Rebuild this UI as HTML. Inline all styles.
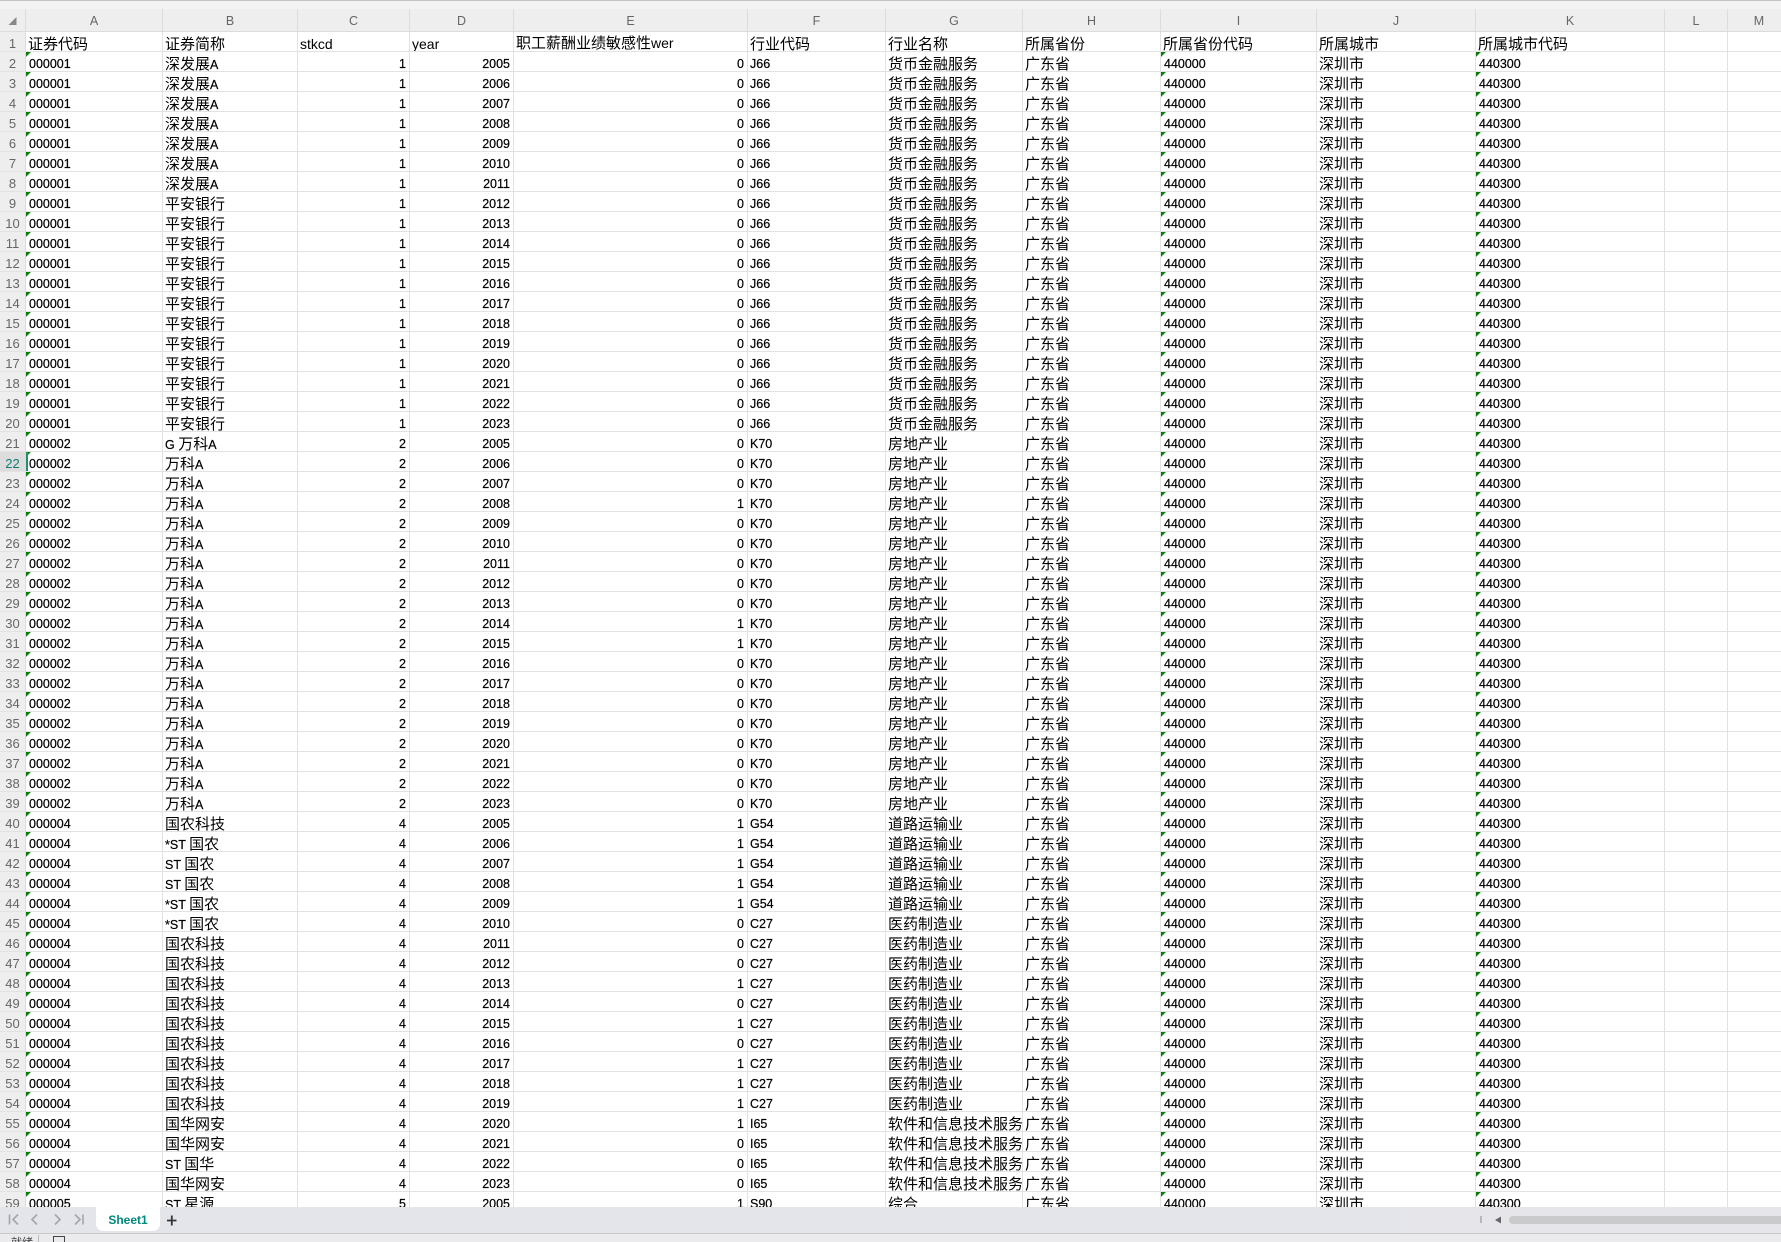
<!DOCTYPE html>
<html lang="zh"><head><meta charset="utf-8"><title>Sheet1</title>
<style>
html,body{margin:0;padding:0;background:#f3f3f3;width:1781px;height:1242px;overflow:hidden}
body{position:relative;font-family:"Liberation Sans","WenQuanYi Zen Hei","Noto Sans CJK SC",sans-serif}
#top{position:absolute;left:0;top:0;width:1781px;height:1px;background:#c4c4c4}
table{position:absolute;left:0;top:9px;border-collapse:separate;border-spacing:0;table-layout:fixed;width:1791px;background:#fff}
th,td{box-sizing:border-box;height:20px;border-right:1px solid #e2e2e2;border-bottom:1px solid #e2e2e2;overflow:hidden;white-space:nowrap;padding:6px 2px 0;line-height:13px;font-size:15px;font-weight:400;color:#000;text-align:left;vertical-align:top}
thead th{height:23px;background:#eee;color:#666;font-size:12.500px;text-align:center;padding-top:6px;border-right:1px solid #dcdcdc;border-bottom:1px solid #dcdcdc}
tbody th{background:#eee;color:#666;font-size:13px;text-align:center;padding:4px 0 0;line-height:15px;border-right:1px solid #dcdcdc}
tbody th.s{background:#dcdcdc;color:#0f7d74}
td.s{box-shadow:inset 2px 0 0 #1f8f70}
td b{font-weight:400;font-size:12.500px;line-height:0;-webkit-text-stroke:.2px #000}
.n,.t,.r,.l{font-size:12.500px;-webkit-text-stroke:.2px #000;padding-top:6px;line-height:13px}
.n{font-size:14px;-webkit-text-stroke:0;padding-top:5px;line-height:14px}
.r{text-align:right;padding-right:3px}
.t{padding-left:3px;background:linear-gradient(135deg,#0a7d0a 3.4px,transparent 3.6px) no-repeat 0 0/6px 6px}
#h1 b{font-size:14px;-webkit-text-stroke:0}
#tabs{position:absolute;left:0;top:1207px;width:1781px;height:26px;background:#e3e5ea;border-bottom:1px solid #c9c9c9;box-sizing:content-box}
#tabs .fade{position:absolute;left:1400px;right:0;top:0;bottom:0;background:#e6e6ea}
#tab{position:absolute;left:96px;top:0;width:64px;height:24px;background:#fff;border-radius:0 0 7px 7px;color:#00897b;font-weight:700;font-size:12px;line-height:27px;text-align:center}
#sb{position:absolute;left:1509px;top:9px;width:272px;height:8px;background:#cacacc;border-radius:4px 0 0 4px}
#status{position:absolute;left:0;top:1234px;width:1781px;height:8px;background:#ebebee;overflow:hidden}
#status span{position:absolute;left:11px;top:3px;font-size:11px;line-height:12px;color:#444}
svg{position:absolute;left:0;top:0}
</style></head><body>
<div id="top"></div>
<table>
<colgroup><col style="width:26px"><col style="width:137px"><col style="width:135px"><col style="width:112px"><col style="width:104px"><col style="width:234px"><col style="width:138px"><col style="width:137px"><col style="width:138px"><col style="width:156px"><col style="width:159px"><col style="width:189px"><col style="width:63px"><col style="width:63px"></colgroup>
<thead><tr><th style="font-size:8px;color:#888;padding-top:6px">◢<th>A<th>B<th>C<th>D<th>E<th>F<th>G<th>H<th>I<th>J<th>K<th>L<th>M</tr></thead>
<tbody>
<tr id="h1"><th>1<td>证券代码<td>证券简称<td class=n>stkcd<td class=n>year<td style="padding-top:4px;line-height:15px">职工薪酬业绩敏感性<b>wer</b><td>行业代码<td>行业名称<td>所属省份<td>所属省份代码<td>所属城市<td>所属城市代码<td><td>
<tr><th>2<td class=t>000001<td>深发展<b>A</b><td class=r>1<td class=r>2005<td class=r>0<td class=l>J66<td>货币金融服务<td>广东省<td class=t>440000<td>深圳市<td class=t>440300<td><td>
<tr><th>3<td class=t>000001<td>深发展<b>A</b><td class=r>1<td class=r>2006<td class=r>0<td class=l>J66<td>货币金融服务<td>广东省<td class=t>440000<td>深圳市<td class=t>440300<td><td>
<tr><th>4<td class=t>000001<td>深发展<b>A</b><td class=r>1<td class=r>2007<td class=r>0<td class=l>J66<td>货币金融服务<td>广东省<td class=t>440000<td>深圳市<td class=t>440300<td><td>
<tr><th>5<td class=t>000001<td>深发展<b>A</b><td class=r>1<td class=r>2008<td class=r>0<td class=l>J66<td>货币金融服务<td>广东省<td class=t>440000<td>深圳市<td class=t>440300<td><td>
<tr><th>6<td class=t>000001<td>深发展<b>A</b><td class=r>1<td class=r>2009<td class=r>0<td class=l>J66<td>货币金融服务<td>广东省<td class=t>440000<td>深圳市<td class=t>440300<td><td>
<tr><th>7<td class=t>000001<td>深发展<b>A</b><td class=r>1<td class=r>2010<td class=r>0<td class=l>J66<td>货币金融服务<td>广东省<td class=t>440000<td>深圳市<td class=t>440300<td><td>
<tr><th>8<td class=t>000001<td>深发展<b>A</b><td class=r>1<td class=r>2011<td class=r>0<td class=l>J66<td>货币金融服务<td>广东省<td class=t>440000<td>深圳市<td class=t>440300<td><td>
<tr><th>9<td class=t>000001<td>平安银行<td class=r>1<td class=r>2012<td class=r>0<td class=l>J66<td>货币金融服务<td>广东省<td class=t>440000<td>深圳市<td class=t>440300<td><td>
<tr><th>10<td class=t>000001<td>平安银行<td class=r>1<td class=r>2013<td class=r>0<td class=l>J66<td>货币金融服务<td>广东省<td class=t>440000<td>深圳市<td class=t>440300<td><td>
<tr><th>11<td class=t>000001<td>平安银行<td class=r>1<td class=r>2014<td class=r>0<td class=l>J66<td>货币金融服务<td>广东省<td class=t>440000<td>深圳市<td class=t>440300<td><td>
<tr><th>12<td class=t>000001<td>平安银行<td class=r>1<td class=r>2015<td class=r>0<td class=l>J66<td>货币金融服务<td>广东省<td class=t>440000<td>深圳市<td class=t>440300<td><td>
<tr><th>13<td class=t>000001<td>平安银行<td class=r>1<td class=r>2016<td class=r>0<td class=l>J66<td>货币金融服务<td>广东省<td class=t>440000<td>深圳市<td class=t>440300<td><td>
<tr><th>14<td class=t>000001<td>平安银行<td class=r>1<td class=r>2017<td class=r>0<td class=l>J66<td>货币金融服务<td>广东省<td class=t>440000<td>深圳市<td class=t>440300<td><td>
<tr><th>15<td class=t>000001<td>平安银行<td class=r>1<td class=r>2018<td class=r>0<td class=l>J66<td>货币金融服务<td>广东省<td class=t>440000<td>深圳市<td class=t>440300<td><td>
<tr><th>16<td class=t>000001<td>平安银行<td class=r>1<td class=r>2019<td class=r>0<td class=l>J66<td>货币金融服务<td>广东省<td class=t>440000<td>深圳市<td class=t>440300<td><td>
<tr><th>17<td class=t>000001<td>平安银行<td class=r>1<td class=r>2020<td class=r>0<td class=l>J66<td>货币金融服务<td>广东省<td class=t>440000<td>深圳市<td class=t>440300<td><td>
<tr><th>18<td class=t>000001<td>平安银行<td class=r>1<td class=r>2021<td class=r>0<td class=l>J66<td>货币金融服务<td>广东省<td class=t>440000<td>深圳市<td class=t>440300<td><td>
<tr><th>19<td class=t>000001<td>平安银行<td class=r>1<td class=r>2022<td class=r>0<td class=l>J66<td>货币金融服务<td>广东省<td class=t>440000<td>深圳市<td class=t>440300<td><td>
<tr><th>20<td class=t>000001<td>平安银行<td class=r>1<td class=r>2023<td class=r>0<td class=l>J66<td>货币金融服务<td>广东省<td class=t>440000<td>深圳市<td class=t>440300<td><td>
<tr><th>21<td class=t>000002<td><b>G </b>万科<b>A</b><td class=r>2<td class=r>2005<td class=r>0<td class=l>K70<td>房地产业<td>广东省<td class=t>440000<td>深圳市<td class=t>440300<td><td>
<tr><th class=s>22<td class="t s">000002<td>万科<b>A</b><td class=r>2<td class=r>2006<td class=r>0<td class=l>K70<td>房地产业<td>广东省<td class=t>440000<td>深圳市<td class=t>440300<td><td>
<tr><th>23<td class=t>000002<td>万科<b>A</b><td class=r>2<td class=r>2007<td class=r>0<td class=l>K70<td>房地产业<td>广东省<td class=t>440000<td>深圳市<td class=t>440300<td><td>
<tr><th>24<td class=t>000002<td>万科<b>A</b><td class=r>2<td class=r>2008<td class=r>1<td class=l>K70<td>房地产业<td>广东省<td class=t>440000<td>深圳市<td class=t>440300<td><td>
<tr><th>25<td class=t>000002<td>万科<b>A</b><td class=r>2<td class=r>2009<td class=r>0<td class=l>K70<td>房地产业<td>广东省<td class=t>440000<td>深圳市<td class=t>440300<td><td>
<tr><th>26<td class=t>000002<td>万科<b>A</b><td class=r>2<td class=r>2010<td class=r>0<td class=l>K70<td>房地产业<td>广东省<td class=t>440000<td>深圳市<td class=t>440300<td><td>
<tr><th>27<td class=t>000002<td>万科<b>A</b><td class=r>2<td class=r>2011<td class=r>0<td class=l>K70<td>房地产业<td>广东省<td class=t>440000<td>深圳市<td class=t>440300<td><td>
<tr><th>28<td class=t>000002<td>万科<b>A</b><td class=r>2<td class=r>2012<td class=r>0<td class=l>K70<td>房地产业<td>广东省<td class=t>440000<td>深圳市<td class=t>440300<td><td>
<tr><th>29<td class=t>000002<td>万科<b>A</b><td class=r>2<td class=r>2013<td class=r>0<td class=l>K70<td>房地产业<td>广东省<td class=t>440000<td>深圳市<td class=t>440300<td><td>
<tr><th>30<td class=t>000002<td>万科<b>A</b><td class=r>2<td class=r>2014<td class=r>1<td class=l>K70<td>房地产业<td>广东省<td class=t>440000<td>深圳市<td class=t>440300<td><td>
<tr><th>31<td class=t>000002<td>万科<b>A</b><td class=r>2<td class=r>2015<td class=r>1<td class=l>K70<td>房地产业<td>广东省<td class=t>440000<td>深圳市<td class=t>440300<td><td>
<tr><th>32<td class=t>000002<td>万科<b>A</b><td class=r>2<td class=r>2016<td class=r>0<td class=l>K70<td>房地产业<td>广东省<td class=t>440000<td>深圳市<td class=t>440300<td><td>
<tr><th>33<td class=t>000002<td>万科<b>A</b><td class=r>2<td class=r>2017<td class=r>0<td class=l>K70<td>房地产业<td>广东省<td class=t>440000<td>深圳市<td class=t>440300<td><td>
<tr><th>34<td class=t>000002<td>万科<b>A</b><td class=r>2<td class=r>2018<td class=r>0<td class=l>K70<td>房地产业<td>广东省<td class=t>440000<td>深圳市<td class=t>440300<td><td>
<tr><th>35<td class=t>000002<td>万科<b>A</b><td class=r>2<td class=r>2019<td class=r>0<td class=l>K70<td>房地产业<td>广东省<td class=t>440000<td>深圳市<td class=t>440300<td><td>
<tr><th>36<td class=t>000002<td>万科<b>A</b><td class=r>2<td class=r>2020<td class=r>0<td class=l>K70<td>房地产业<td>广东省<td class=t>440000<td>深圳市<td class=t>440300<td><td>
<tr><th>37<td class=t>000002<td>万科<b>A</b><td class=r>2<td class=r>2021<td class=r>0<td class=l>K70<td>房地产业<td>广东省<td class=t>440000<td>深圳市<td class=t>440300<td><td>
<tr><th>38<td class=t>000002<td>万科<b>A</b><td class=r>2<td class=r>2022<td class=r>0<td class=l>K70<td>房地产业<td>广东省<td class=t>440000<td>深圳市<td class=t>440300<td><td>
<tr><th>39<td class=t>000002<td>万科<b>A</b><td class=r>2<td class=r>2023<td class=r>0<td class=l>K70<td>房地产业<td>广东省<td class=t>440000<td>深圳市<td class=t>440300<td><td>
<tr><th>40<td class=t>000004<td>国农科技<td class=r>4<td class=r>2005<td class=r>1<td class=l>G54<td>道路运输业<td>广东省<td class=t>440000<td>深圳市<td class=t>440300<td><td>
<tr><th>41<td class=t>000004<td><b>*ST </b>国农<td class=r>4<td class=r>2006<td class=r>1<td class=l>G54<td>道路运输业<td>广东省<td class=t>440000<td>深圳市<td class=t>440300<td><td>
<tr><th>42<td class=t>000004<td><b>ST </b>国农<td class=r>4<td class=r>2007<td class=r>1<td class=l>G54<td>道路运输业<td>广东省<td class=t>440000<td>深圳市<td class=t>440300<td><td>
<tr><th>43<td class=t>000004<td><b>ST </b>国农<td class=r>4<td class=r>2008<td class=r>1<td class=l>G54<td>道路运输业<td>广东省<td class=t>440000<td>深圳市<td class=t>440300<td><td>
<tr><th>44<td class=t>000004<td><b>*ST </b>国农<td class=r>4<td class=r>2009<td class=r>1<td class=l>G54<td>道路运输业<td>广东省<td class=t>440000<td>深圳市<td class=t>440300<td><td>
<tr><th>45<td class=t>000004<td><b>*ST </b>国农<td class=r>4<td class=r>2010<td class=r>0<td class=l>C27<td>医药制造业<td>广东省<td class=t>440000<td>深圳市<td class=t>440300<td><td>
<tr><th>46<td class=t>000004<td>国农科技<td class=r>4<td class=r>2011<td class=r>0<td class=l>C27<td>医药制造业<td>广东省<td class=t>440000<td>深圳市<td class=t>440300<td><td>
<tr><th>47<td class=t>000004<td>国农科技<td class=r>4<td class=r>2012<td class=r>0<td class=l>C27<td>医药制造业<td>广东省<td class=t>440000<td>深圳市<td class=t>440300<td><td>
<tr><th>48<td class=t>000004<td>国农科技<td class=r>4<td class=r>2013<td class=r>1<td class=l>C27<td>医药制造业<td>广东省<td class=t>440000<td>深圳市<td class=t>440300<td><td>
<tr><th>49<td class=t>000004<td>国农科技<td class=r>4<td class=r>2014<td class=r>0<td class=l>C27<td>医药制造业<td>广东省<td class=t>440000<td>深圳市<td class=t>440300<td><td>
<tr><th>50<td class=t>000004<td>国农科技<td class=r>4<td class=r>2015<td class=r>1<td class=l>C27<td>医药制造业<td>广东省<td class=t>440000<td>深圳市<td class=t>440300<td><td>
<tr><th>51<td class=t>000004<td>国农科技<td class=r>4<td class=r>2016<td class=r>0<td class=l>C27<td>医药制造业<td>广东省<td class=t>440000<td>深圳市<td class=t>440300<td><td>
<tr><th>52<td class=t>000004<td>国农科技<td class=r>4<td class=r>2017<td class=r>1<td class=l>C27<td>医药制造业<td>广东省<td class=t>440000<td>深圳市<td class=t>440300<td><td>
<tr><th>53<td class=t>000004<td>国农科技<td class=r>4<td class=r>2018<td class=r>1<td class=l>C27<td>医药制造业<td>广东省<td class=t>440000<td>深圳市<td class=t>440300<td><td>
<tr><th>54<td class=t>000004<td>国农科技<td class=r>4<td class=r>2019<td class=r>1<td class=l>C27<td>医药制造业<td>广东省<td class=t>440000<td>深圳市<td class=t>440300<td><td>
<tr><th>55<td class=t>000004<td>国华网安<td class=r>4<td class=r>2020<td class=r>1<td class=l>I65<td>软件和信息技术服务业<td>广东省<td class=t>440000<td>深圳市<td class=t>440300<td><td>
<tr><th>56<td class=t>000004<td>国华网安<td class=r>4<td class=r>2021<td class=r>0<td class=l>I65<td>软件和信息技术服务业<td>广东省<td class=t>440000<td>深圳市<td class=t>440300<td><td>
<tr><th>57<td class=t>000004<td><b>ST </b>国华<td class=r>4<td class=r>2022<td class=r>0<td class=l>I65<td>软件和信息技术服务业<td>广东省<td class=t>440000<td>深圳市<td class=t>440300<td><td>
<tr><th>58<td class=t>000004<td>国华网安<td class=r>4<td class=r>2023<td class=r>0<td class=l>I65<td>软件和信息技术服务业<td>广东省<td class=t>440000<td>深圳市<td class=t>440300<td><td>
<tr><th>59<td class=t>000005<td><b>ST </b>星源<td class=r>5<td class=r>2005<td class=r>1<td class=l>S90<td>综合<td>广东省<td class=t>440000<td>深圳市<td class=t>440300<td><td>
</tbody></table>
<div id="tabs"><div class="fade"></div>
<svg width="200" height="26" fill="none" stroke="#a3a5aa" stroke-width="1.6"><path d="M9.500 7.500V17.500M18 7.500L13 12.500L18 17.500M37 7.500L32 12.500L37 17.500M55 7.500L60 12.500L55 17.500M75 7.500L80 12.500L75 17.500M83 7.500V17.500"/><path d="M167 13.500H176.500M171.800 8.500V18.500" stroke="#333" stroke-width="1.800"/></svg>
<div id="tab">Sheet1</div>
<svg width="1781" height="26" fill="none" style="pointer-events:none"><path d="M1481 9V16" stroke="#a8a8aa" stroke-width="1.500"/><path d="M1501 9.500L1495 13L1501 16.500Z" fill="#666"/></svg>
<div id="sb"></div></div>
<div id="status"><span>就绪</span><svg width="100" height="8" fill="none"><path d="M53.500 8V2.500H64.500V8" stroke="#444"/><path d="M38.500 1V8" stroke="#bbb"/></svg></div>
</body></html>
